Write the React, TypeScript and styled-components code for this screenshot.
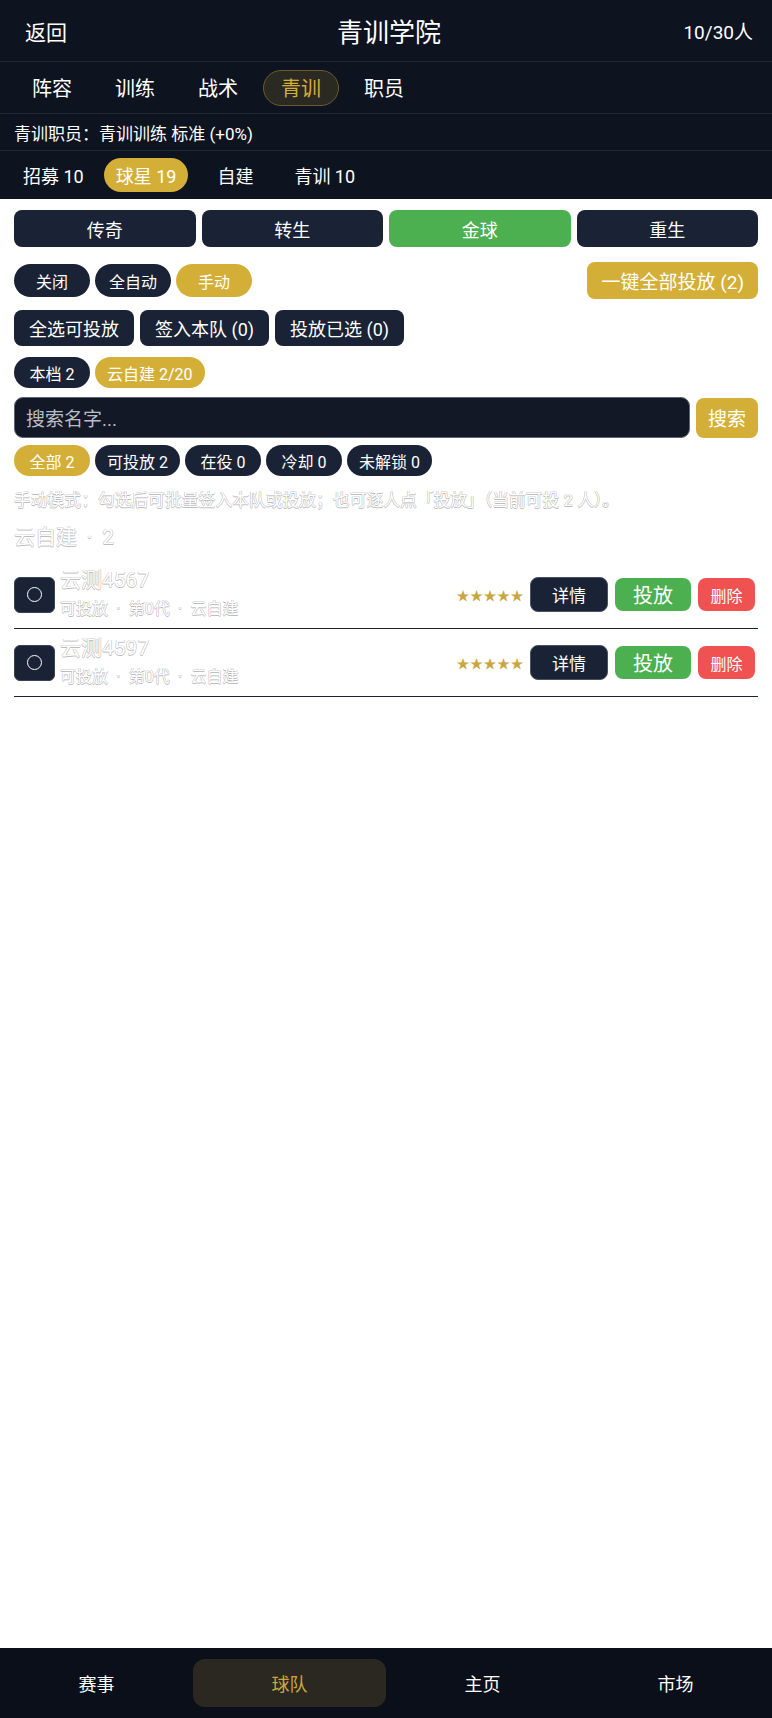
import React from "react";
import styled, { createGlobalStyle } from "styled-components";

const Global = createGlobalStyle`
  html, body { margin: 0; padding: 0; background: #ffffff; }
  body { font-family: Roboto, "Noto Sans CJK SC", "Noto Sans", sans-serif; }
  * { box-sizing: border-box; }
`;

const Page = styled.div`
  min-height: 100vh;
  display: flex;
  flex-direction: column;
  background: #ffffff;
`;

const Dark = styled.div`
  background: #0e1320;
  color: #ffffff;
`;

const TopBar = styled.div`
  height: 62px;
  display: grid;
  grid-template-columns: 1fr auto 1fr;
  align-items: center;
  padding: 0 19px 0 25px;
  border-bottom: 1px solid #1f2636;
`;

const Back = styled.div`
  font-size: 21px;
  justify-self: start;
`;

const Title = styled.div`
  font-size: 26px;
`;

const Count = styled.div`
  font-size: 19px;
  justify-self: end;
`;

const TabBar = styled.div`
  height: 52px;
  display: flex;
  align-items: center;
  gap: 7px;
  padding-left: 14px;
  border-bottom: 1px solid #1f2636;
`;

const Tab = styled.div<{ $active?: boolean }>`
  height: 36px;
  padding: 0 17px;
  display: flex;
  align-items: center;
  font-size: 20px;
  border-radius: 18px;
  color: ${(p) => (p.$active ? "#d4af37" : "#ffffff")};
  background: ${(p) => (p.$active ? "#2b2a22" : "transparent")};
  border: 1px solid ${(p) => (p.$active ? "#6b5d2c" : "transparent")};
`;

const StaffLine = styled.div`
  height: 37px;
  display: flex;
  align-items: center;
  padding-left: 14px;
  font-size: 17px;
  border-bottom: 1px solid #1f2636;
`;

const SubTabs = styled.div`
  height: 48px;
  display: flex;
  align-items: center;
  padding-left: 11px;
`;

const SubTab = styled.div<{ $active?: boolean; $ml: number }>`
  height: 34px;
  padding: 0 12px;
  margin-left: ${(p) => p.$ml}px;
  display: flex;
  align-items: center;
  font-size: 18px;
  border-radius: 17px;
  background: ${(p) => (p.$active ? "#d4af37" : "transparent")};
`;

const Main = styled.div`
  flex: 1;
  padding: 11px 14px 20px;
  display: flex;
  flex-direction: column;
`;

const CatGrid = styled.div`
  display: grid;
  grid-template-columns: repeat(4, 1fr);
  gap: 6px;
`;

const CatBtn = styled.div<{ $active?: boolean }>`
  height: 37px;
  border-radius: 8px;
  display: flex;
  align-items: center;
  justify-content: center;
  font-size: 18px;
  color: #fff;
  background: ${(p) => (p.$active ? "#4caf50" : "#1a2236")};
`;

const Row = styled.div<{ $mt: number; $gap?: number }>`
  display: flex;
  align-items: center;
  gap: ${(p) => p.$gap ?? 6}px;
  margin-top: ${(p) => p.$mt}px;
`;

const Pill = styled.div<{ $gold?: boolean; $h?: number }>`
  height: ${(p) => p.$h ?? 31}px;
  min-width: 76px;
  padding: 0 12px;
  border-radius: 17px;
  display: flex;
  align-items: center;
  justify-content: center;
  font-size: 16px;
  color: #fff;
  background: ${(p) => (p.$gold ? "#d4af37" : "#1a2236")};
  white-space: nowrap;
`;

const Spacer = styled.div`
  flex: 1;
`;

const Btn = styled.div<{ $bg: string; $h?: number; $fs?: number; $px?: number }>`
  height: ${(p) => p.$h ?? 36}px;
  padding: 0 ${(p) => p.$px ?? 15}px;
  border-radius: 8px;
  display: flex;
  align-items: center;
  justify-content: center;
  font-size: ${(p) => p.$fs ?? 18}px;
  color: #fff;
  background: ${(p) => p.$bg};
  white-space: nowrap;
`;

const SearchRow = styled.div`
  display: flex;
  gap: 6px;
  margin-top: 9px;
  align-items: center;
`;

const SearchBox = styled.div`
  flex: 1;
  height: 41px;
  border-radius: 9px;
  background: #121826;
  border: 1px solid #5d6373;
  display: flex;
  align-items: center;
  padding-left: 11px;
  font-size: 19px;
  color: #b9bcc4;
`;

const Ghost = styled.div<{ $fs: number; $mt?: number }>`
  color: #ffffff;
  font-size: ${(p) => p.$fs}px;
  margin-top: ${(p) => p.$mt ?? 0}px;
  text-shadow: -0.5px 0 #bdbdbd, 0.5px 0 #bdbdbd, 0 -0.5px #bdbdbd, 0 0.5px #bdbdbd;
  white-space: nowrap;
  line-height: 1.3;
`;

const Sep = styled.span<{ $w: number }>`
  display: inline-block;
  width: ${(p) => p.$w}em;
  text-align: center;
`;

const List = styled.div`
  margin-top: 10px;
  display: flex;
  flex-direction: column;
`;

const Item = styled.div`
  height: 68px;
  display: flex;
  align-items: center;
  padding-right: 3px;
  border-bottom: 1px solid #1a2236;
`;

const Check = styled.div`
  width: 41px;
  height: 36px;
  border-radius: 6px;
  background: #1a2236;
  border: 1px solid #3a4256;
  display: flex;
  align-items: center;
  justify-content: center;
  flex-shrink: 0;
`;

const Circle = styled.div`
  width: 15px;
  height: 15px;
  border-radius: 50%;
  border: 1.2px solid #ffffff;
`;

const Info = styled.div`
  margin-left: 5px;
  display: flex;
  flex-direction: column;
  gap: 5px;
  flex: 1;
  margin-top: -2px;
`;

const Stars = styled.div`
  color: #c9a640;
  font-size: 13px;
  letter-spacing: 0.5px;
  margin-right: 6px;
`;

const Actions = styled.div`
  display: flex;
  gap: 7px;
  align-items: center;
`;

const DetailBtn = styled.div`
  width: 78px;
  height: 35px;
  border-radius: 8px;
  background: #1a2236;
  border: 1px solid #4a5163;
  color: #fff;
  font-size: 17px;
  display: flex;
  align-items: center;
  justify-content: center;
`;

const ColorBtn = styled.div<{ $bg: string; $w: number; $fs: number }>`
  width: ${(p) => p.$w}px;
  height: 33px;
  border-radius: 8px;
  background: ${(p) => p.$bg};
  color: #fff;
  font-size: ${(p) => p.$fs}px;
  display: flex;
  align-items: center;
  justify-content: center;
`;

const BottomNav = styled.div`
  height: 70px;
  background: #0b0f1a;
  display: grid;
  grid-template-columns: repeat(4, 1fr);
  align-items: center;
`;

const NavItem = styled.div<{ $active?: boolean }>`
  height: 48px;
  border-radius: 12px;
  display: flex;
  align-items: center;
  justify-content: center;
  font-size: 18px;
  color: ${(p) => (p.$active ? "#c9a73c" : "#ffffff")};
  background: ${(p) => (p.$active ? "#2a2821" : "transparent")};
`;

const players = [{ name: "云测4567" }, { name: "云测4597" }];

export default function App() {
  return (
    <Page>
      <Global />
      <Dark>
        <TopBar>
          <Back>返回</Back>
          <Title>青训学院</Title>
          <Count>10/30人</Count>
        </TopBar>
        <TabBar>
          <Tab>阵容</Tab>
          <Tab>训练</Tab>
          <Tab>战术</Tab>
          <Tab $active>青训</Tab>
          <Tab>职员</Tab>
        </TabBar>
        <StaffLine>青训职员：青训训练 标准 (+0%)</StaffLine>
        <SubTabs>
          <SubTab $ml={0}>招募 10</SubTab>
          <SubTab $ml={8} $active>球星 19</SubTab>
          <SubTab $ml={17}>自建</SubTab>
          <SubTab $ml={17}>青训 10</SubTab>
        </SubTabs>
      </Dark>
      <Main>
        <CatGrid>
          <CatBtn>传奇</CatBtn>
          <CatBtn>转生</CatBtn>
          <CatBtn $active>金球</CatBtn>
          <CatBtn>重生</CatBtn>
        </CatGrid>
        <Row $mt={15} $gap={5}>
          <Pill $h={33}>关闭</Pill>
          <Pill $h={33}>全自动</Pill>
          <Pill $h={33} $gold>手动</Pill>
          <Spacer />
          <Btn $bg="#d4af37" $h={37} $fs={19} $px={14}>一键全部投放 (2)</Btn>
        </Row>
        <Row $mt={11}>
          <Btn $bg="#1a2236">全选可投放</Btn>
          <Btn $bg="#1a2236">签入本队 (0)</Btn>
          <Btn $bg="#1a2236">投放已选 (0)</Btn>
        </Row>
        <Row $mt={11} $gap={5}>
          <Pill>本档 2</Pill>
          <Pill $gold>云自建 2/20</Pill>
        </Row>
        <SearchRow>
          <SearchBox>搜索名字...</SearchBox>
          <Btn $bg="#d4af37" $h={40} $fs={19} $px={12}>搜索</Btn>
        </SearchRow>
        <Row $mt={7} $gap={5}>
          <Pill $gold>全部 2</Pill>
          <Pill>可投放 2</Pill>
          <Pill>在役 0</Pill>
          <Pill>冷却 0</Pill>
          <Pill>未解锁 0</Pill>
        </Row>
        <Ghost $fs={16.8} $mt={14}>
          手动模式：勾选后可批量签入本队或投放；也可逐人点「投放」（当前可投 2 人）。
        </Ghost>
        <Ghost $fs={21} $mt={12}>
          云自建<Sep $w={1.2}>·</Sep>2
        </Ghost>
        <List>
          {players.map((p) => (
            <Item key={p.name}>
              <Check>
                <Circle />
              </Check>
              <Info>
                <Ghost $fs={21}>{p.name}</Ghost>
                <Ghost $fs={16}>
                  可投放<Sep $w={1.3}>·</Sep>第0代<Sep $w={1.3}>·</Sep>云自建
                </Ghost>
              </Info>
              <Stars>★★★★★</Stars>
              <Actions>
                <DetailBtn>详情</DetailBtn>
                <ColorBtn $bg="#4caf50" $w={76} $fs={20}>投放</ColorBtn>
                <ColorBtn $bg="#f05252" $w={57} $fs={16}>删除</ColorBtn>
              </Actions>
            </Item>
          ))}
        </List>
      </Main>
      <BottomNav>
        <NavItem>赛事</NavItem>
        <NavItem $active>球队</NavItem>
        <NavItem>主页</NavItem>
        <NavItem>市场</NavItem>
      </BottomNav>
    </Page>
  );
}
